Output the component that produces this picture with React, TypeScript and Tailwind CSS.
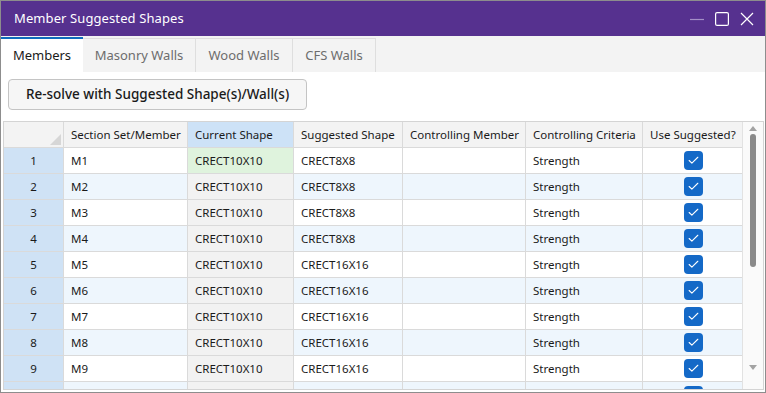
import { Check } from "lucide-react";

const rows = [
  { n: 1, m: "M1", cur: "CRECT10X10", sug: "CRECT8X8" },
  { n: 2, m: "M2", cur: "CRECT10X10", sug: "CRECT8X8" },
  { n: 3, m: "M3", cur: "CRECT10X10", sug: "CRECT8X8" },
  { n: 4, m: "M4", cur: "CRECT10X10", sug: "CRECT8X8" },
  { n: 5, m: "M5", cur: "CRECT10X10", sug: "CRECT16X16" },
  { n: 6, m: "M6", cur: "CRECT10X10", sug: "CRECT16X16" },
  { n: 7, m: "M7", cur: "CRECT10X10", sug: "CRECT16X16" },
  { n: 8, m: "M8", cur: "CRECT10X10", sug: "CRECT16X16" },
  { n: 9, m: "M9", cur: "CRECT10X10", sug: "CRECT16X16" },
];

const cols = "grid grid-cols-[60px_124px_106px_109px_123px_117px_101px]";
const cell = "flex items-center px-[7px] border-r border-[#dadada] whitespace-nowrap";

const CheckBox = () => (
  <div className="w-[19px] h-[19px] rounded-[4px] bg-[#1469c7] flex items-center justify-center">
    <Check className="w-[13px] h-[13px] text-white" strokeWidth={2} />
  </div>
);

const TitleBar = () => (
  <div className="h-[35px] bg-[#56318f] flex items-center pl-[13px] pr-[11px] shrink-0">
    <span className="text-white text-[13px] tracking-[0.1px]">Member Suggested Shapes</span>
    <div className="ml-auto flex items-center gap-[11px]">
      <svg width="14" height="14" viewBox="0 0 14 14">
        <line x1="0" y1="7.5" x2="14" y2="7.5" stroke="#a48fc6" strokeWidth="1.2" />
      </svg>
      <svg width="14" height="14" viewBox="0 0 14 14">
        <rect x="0.6" y="0.6" width="12.8" height="12.8" rx="1.5" fill="none" stroke="#fff" strokeWidth="1.2" />
      </svg>
      <svg width="14" height="14" viewBox="0 0 14 14">
        <path d="M1 1 L13 13 M13 1 L1 13" stroke="#fff" strokeWidth="1.2" />
      </svg>
    </div>
  </div>
);

const tabs = [
  { t: "Masonry Walls", w: "w-[113px]" },
  { t: "Wood Walls", w: "w-[97px]" },
  { t: "CFS Walls", w: "w-[83px]" },
];

const TabBar = () => (
  <div className="h-[36px] bg-[#f3f3f3] flex items-end shrink-0">
    <div className="h-[35px] w-[82px] bg-white border-t-2 border-[#0f6cbd] flex items-center justify-center text-[13px] text-[#1a1a1a]">
      Members
    </div>
    {tabs.map((t) => (
      <div
        key={t.t}
        className={`h-[34px] ${t.w} border-t border-r border-[#dedede] flex items-center justify-center text-[13px] text-[#6d6d6d]`}
      >
        {t.t}
      </div>
    ))}
  </div>
);

export default function App() {
  return (
    <div
      className="w-[766px] h-[393px] border border-[#8d8d8d] bg-white flex flex-col overflow-hidden"
      style={{ fontFamily: '"Noto Sans", "Open Sans", sans-serif' }}
    >
      <TitleBar />
      <TabBar />
      <div className="flex-1 flex flex-col pt-[7px] pl-[2px] pr-[1px] pb-[2px] min-h-0">
        <button className="ml-[5px] w-[299px] h-[31px] rounded-[4px] border border-[#c4c4c4] bg-[#f6f6f6] text-[13.5px] font-medium text-[#1a1a1a] shrink-0">
          Re-solve with Suggested Shape(s)/Wall(s)
        </button>
        <div className="mt-[11px] flex-1 flex border border-[#d4d4d4] min-h-0 overflow-hidden">
          <div className="flex-1 flex flex-col text-[11.5px] text-[#1a1a1a] overflow-hidden">
            <div className={`${cols} h-[26px] bg-[#f3f3f3] border-b border-[#dadada] shrink-0`}>
              <div className="relative border-r border-[#dadada]">
                <svg className="absolute right-[2px] bottom-[2px]" width="11" height="11" viewBox="0 0 11 11">
                  <path d="M11 0 L11 11 L0 11 Z" fill="#d6d6d6" />
                </svg>
              </div>
              <div className={cell}>Section Set/Member</div>
              <div className={`${cell} bg-[#cde2f7]`}>Current Shape</div>
              <div className={cell}>Suggested Shape</div>
              <div className={cell}>Controlling Member</div>
              <div className={cell}>Controlling Criteria</div>
              <div className={cell}>Use Suggested?</div>
            </div>
            {rows.map((r, i) => {
              const even = i % 2 === 1;
              const rowBg = even ? "bg-[#eef6fd]" : "bg-white";
              const curBg = i === 0 ? "bg-[#dff3dd]" : "bg-[#f2f2f2]";
              return (
                <div key={r.n} className={`${cols} h-[26px] border-b border-[#dadada] shrink-0 ${rowBg}`}>
                  <div className="flex items-center justify-center bg-[#cfe2f5] border-r border-[#dadada]">{r.n}</div>
                  <div className={cell}>{r.m}</div>
                  <div className={`${cell} ${curBg}`}>{r.cur}</div>
                  <div className={cell}>{r.sug}</div>
                  <div className={cell}></div>
                  <div className={cell}>Strength</div>
                  <div className="flex items-center justify-center border-r border-[#dadada]">
                    <CheckBox />
                  </div>
                </div>
              );
            })}
            {/* partially visible 10th row */}
            <div className={`${cols} h-[26px] shrink-0 bg-[#eef6fd]`}>
              <div className="bg-[#cfe2f5] border-r border-[#dadada]" />
              <div className={cell} />
              <div className={`${cell} bg-[#f2f2f2]`} />
              <div className={cell} />
              <div className={cell} />
              <div className={cell} />
              <div className="flex items-start justify-center pt-[4px] border-r border-[#dadada]">
                <CheckBox />
              </div>
            </div>
          </div>
          <div className="w-[21px] shrink-0 bg-[#fafafa] border-l border-[#e2e2e2] flex flex-col items-center pt-[4px] pb-[19px]">
            <svg width="8" height="5" viewBox="0 0 8 5">
              <path d="M0 5 L4 0 L8 5 Z" fill="#a3a3a3" />
            </svg>
            <div className="mt-[3px] w-[6px] h-[133px] rounded-full bg-[#8a8a8a]" />
            <div className="mt-auto">
              <svg width="8" height="5" viewBox="0 0 8 5">
                <path d="M0 0 L8 0 L4 5 Z" fill="#a3a3a3" />
              </svg>
            </div>
          </div>
        </div>
      </div>
    </div>
  );
}
